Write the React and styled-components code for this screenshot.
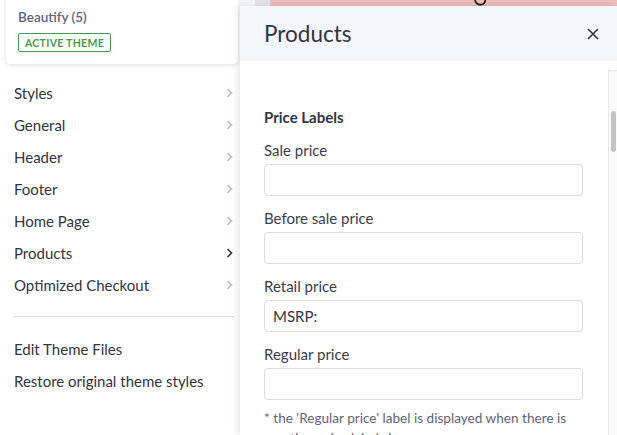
import React from "react";
import styled, { createGlobalStyle } from "styled-components";

const GlobalStyle = createGlobalStyle`
  html, body { margin: 0; padding: 0; background: #ffffff; }
  body { font-family: Lato, "Noto Sans", Arial, sans-serif; overflow: hidden; color: #313440; }
  * { box-sizing: border-box; }
`;

const Layout = styled.div`
  display: flex;
  width: 617px;
  height: 435px;
  overflow: hidden;
  background: #ffffff;
`;

const Sidebar = styled.aside`
  width: 240px;
  flex-shrink: 0;
  display: flex;
  flex-direction: column;
  background: #ffffff;
`;

const ThemeCard = styled.div`
  margin: -6px 2px 0 6px;
  padding: 14px 12px 12px;
  background: #fff;
  border-radius: 4px;
  box-shadow: 0 1px 4px rgba(40, 45, 60, 0.16);
  display: flex;
  flex-direction: column;
  align-items: flex-start;
`;

const ThemeName = styled.div`
  font-size: 13.5px;
  line-height: 18px;
  color: #5e637a;
  font-weight: 600;
`;

const Badge = styled.span`
  margin-top: 7px;
  height: 19px;
  padding: 0 6px;
  border: 1px solid #3f9d4c;
  border-radius: 2px;
  color: #3f9d4c;
  font-size: 10.5px;
  font-weight: 700;
  letter-spacing: 0.3px;
  display: inline-flex;
  align-items: center;
`;

const NavList = styled.nav`
  margin-top: ${(p) => (p.$first ? "13px" : "0")};
  display: flex;
  flex-direction: column;
`;

const NavItem = styled.div`
  height: 32px;
  padding: 0 7px 0 14px;
  display: flex;
  align-items: center;
  justify-content: space-between;
  font-size: 15px;
  color: #313440;
`;

const Divider = styled.hr`
  margin: 15px 6px 16px 14px;
  border: none;
  border-top: 1px solid #dcdde3;
`;

const Main = styled.main`
  flex: 1;
  display: flex;
  flex-direction: column;
  min-width: 0;
`;

const PreviewStrip = styled.div`
  height: 6px;
  flex-shrink: 0;
  display: flex;
  background: #eabcbb;
  overflow: hidden;
`;

const StripSeg = styled.div`
  width: ${(p) => p.$w}px;
  background: ${(p) => p.$bg};
  flex-shrink: 0;
`;

const LogoBit = styled.svg`
  margin-left: 203px;
  flex-shrink: 0;
`;

const Panel = styled.section`
  flex: 1;
  display: flex;
  flex-direction: column;
  background: #fff;
  box-shadow: -3px 0 6px rgba(40, 45, 60, 0.1);
  position: relative;
  min-height: 0;
`;

const PanelHeader = styled.header`
  height: 55px;
  flex-shrink: 0;
  background: #f5f6fa;
  display: flex;
  align-items: center;
  justify-content: space-between;
  padding: 0 18px 0 24px;
`;

const PanelTitle = styled.h2`
  margin: 0;
  font-size: 22.5px;
  font-weight: 400;
  color: #313440;
`;

const CloseBtn = styled.button`
  border: none;
  background: none;
  padding: 0;
  width: 12px;
  height: 12px;
  display: flex;
  cursor: pointer;
`;

const PanelBody = styled.div`
  flex: 1;
  display: flex;
  min-height: 0;
`;

const Content = styled.div`
  flex: 1;
  padding: 46px 25px 0 24px;
  display: flex;
  flex-direction: column;
`;

const SectionTitle = styled.h3`
  margin: 0 0 13px;
  font-size: 15px;
  line-height: 20px;
  font-weight: 700;
  color: #313440;
`;

const Field = styled.div`
  display: flex;
  flex-direction: column;
  margin-bottom: 12px;
`;

const Label = styled.label`
  font-size: 15px;
  line-height: 20px;
  color: #3a3d4a;
  margin-bottom: 4px;
`;

const Input = styled.input`
  height: 32px;
  width: 100%;
  border: 1px solid #d9dbe1;
  border-radius: 4px;
  padding: 0 8px;
  font-family: inherit;
  font-size: 15px;
  color: #313440;
  background: #fff;
  outline: none;
`;

const Note = styled.p`
  margin: -4px 0 0;
  font-size: 13.6px;
  line-height: 20px;
  color: #5e637a;
`;

const ScrollTrack = styled.div`
  width: 9px;
  margin-top: 9px;
  flex-shrink: 0;
  background: #fafafa;
  border-left: 1px solid #e7e7ea;
  border-top: 1px solid #e7e7ea;
  padding: 40px 1px 0 2px;
`;

const ScrollThumb = styled.div`
  height: 41px;
  border-radius: 3px;
  background: #c3c3c6;
`;

const Chevron = ({ active }) => (
  <svg width="7" height="10" viewBox="0 0 7 10">
    <polyline
      points="1.5,1 5.5,5 1.5,9"
      fill="none"
      stroke={active ? "#313440" : "#b9bcc6"}
      strokeWidth="1.6"
    />
  </svg>
);

const navItems = [
  "Styles",
  "General",
  "Header",
  "Footer",
  "Home Page",
  "Products",
  "Optimized Checkout",
];

const fields = [
  { label: "Sale price", value: "" },
  { label: "Before sale price", value: "" },
  { label: "Retail price", value: "MSRP:" },
  { label: "Regular price", value: "" },
];

export default function App() {
  return (
    <>
      <GlobalStyle />
      <Layout>
        <Sidebar>
          <ThemeCard>
            <ThemeName>Beautify (5)</ThemeName>
            <Badge>ACTIVE THEME</Badge>
          </ThemeCard>
          <NavList $first>
            {navItems.map((n) => (
              <NavItem key={n}>
                <span>{n}</span>
                <Chevron active={n === "Products"} />
              </NavItem>
            ))}
          </NavList>
          <Divider />
          <NavList as="div">
            <NavItem>Edit Theme Files</NavItem>
            <NavItem>Restore original theme styles</NavItem>
          </NavList>
        </Sidebar>
        <Main>
          <PreviewStrip>
            <StripSeg $w={15} $bg="#f3f4f7" />
            <StripSeg $w={15} $bg="#dfe2ea" />
            <LogoBit width="16" height="6" viewBox="0 0 16 6">
              <path
                d="M2 0 C3 4 6 5 9 4.5 C11 4 12 2 12.5 0"
                fill="none"
                stroke="#1a1a1a"
                strokeWidth="1.6"
              />
            </LogoBit>
          </PreviewStrip>
          <Panel>
            <PanelHeader>
              <PanelTitle>Products</PanelTitle>
              <CloseBtn aria-label="Close">
                <svg width="12" height="12" viewBox="0 0 12 12">
                  <path
                    d="M1 1 L11 11 M11 1 L1 11"
                    stroke="#313440"
                    strokeWidth="1.6"
                  />
                </svg>
              </CloseBtn>
            </PanelHeader>
            <PanelBody>
              <Content>
                <SectionTitle>Price Labels</SectionTitle>
                {fields.map((f) => (
                  <Field key={f.label}>
                    <Label>{f.label}</Label>
                    <Input defaultValue={f.value} />
                  </Field>
                ))}
                <Note>
                  * the 'Regular price' label is displayed when there is no
                  other price label shown
                </Note>
              </Content>
              <ScrollTrack>
                <ScrollThumb />
              </ScrollTrack>
            </PanelBody>
          </Panel>
        </Main>
      </Layout>
    </>
  );
}
